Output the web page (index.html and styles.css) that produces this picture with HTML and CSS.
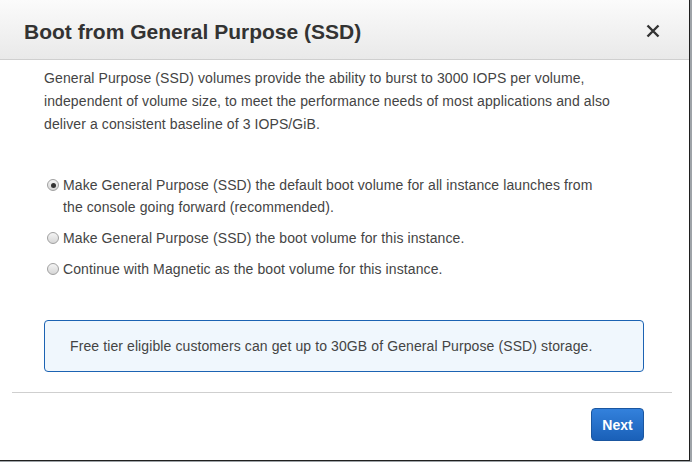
FILE: index.html
```html
<!DOCTYPE html>
<html>
<head>
<meta charset="utf-8">
<link rel="stylesheet" href="styles.css">
</head>
<body>
<div class="dialog">
  <div class="header">
    <h1 class="title">Boot from General Purpose (SSD)</h1>
    <span class="close" aria-label="Close">
      <svg width="14" height="14" viewBox="0 0 14 14"><path d="M1.5 1.5 L12.5 12.5 M12.5 1.5 L1.5 12.5" stroke="#333" stroke-width="2.4" stroke-linecap="butt"/></svg>
    </span>
  </div>
  <div class="body">
    <p class="intro">General Purpose (SSD) volumes provide the ability to burst to 3000 IOPS per volume, independent of volume size, to meet the performance needs of most applications and also deliver a consistent baseline of 3 IOPS/GiB.</p>
    <div class="options">
      <label class="option"><input class="radio" type="radio" name="boot" checked><span class="label-text">Make General Purpose (SSD) the default boot volume for all instance launches from the console going forward (recommended).</span></label>
      <label class="option"><input class="radio" type="radio" name="boot"><span class="label-text">Make General Purpose (SSD) the boot volume for this instance.</span></label>
      <label class="option"><input class="radio" type="radio" name="boot"><span class="label-text">Continue with Magnetic as the boot volume for this instance.</span></label>
    </div>
    <div class="info">Free tier eligible customers can get up to 30GB of General Purpose (SSD) storage.</div>
  </div>
  <div class="footer">
    <button class="btn-next">Next</button>
  </div>
</div>
</body>
</html>
```
FILE: styles.css
```css
html, body {
  margin: 0;
  padding: 0;
}
body {
  background: #9ea3a8;
  width: 692px;
  height: 462px;
  overflow: hidden;
  font-family: "Liberation Sans", Arial, sans-serif;
}
.dialog {
  width: 689px;
  height: 460px;
  background: #fff;
  border-right: 1px solid #1f1f1f;
  border-bottom: 1px solid #1f1f1f;
  display: flex;
  flex-direction: column;
}
.header {
  height: 59px;
  border-bottom: 1px solid #cfcfcf;
  background: linear-gradient(#fbfbfb, #e9e9e9);
  display: flex;
  align-items: center;
  justify-content: space-between;
  padding: 0 29px 0 24px;
}
.title {
  margin: 0;
  font-size: 21px;
  font-weight: bold;
  color: #333;
  padding-top: 4px;
}
.close {
  display: flex;
  width: 14px;
  height: 14px;
  margin-top: 3px;
}
.body {
  padding: 0 45px 0 44px;
}
.intro {
  margin: 7px 0 0;
  font-size: 14px;
  line-height: 23px;
  letter-spacing: 0.1px;
  color: #444;
}
.options {
  margin-top: 38px;
  display: flex;
  flex-direction: column;
  gap: 9px;
}
.option {
  display: flex;
  align-items: flex-start;
  font-size: 14px;
  line-height: 22px;
  letter-spacing: 0.1px;
  color: #444;
  padding-left: 3px;
}
.label-text {
  width: 545px;
}
.radio {
  appearance: none;
  -webkit-appearance: none;
  width: 12px;
  height: 12px;
  margin: 5px 4px 0 0;
  border: 1px solid #a0a0a0;
  border-radius: 50%;
  background: linear-gradient(#f4f4f4, #d6d6d6);
  box-sizing: border-box;
  flex: none;
  position: relative;
}
.radio:checked::after {
  content: "";
  position: absolute;
  left: 2.5px;
  top: 2.5px;
  width: 5px;
  height: 5px;
  border-radius: 50%;
  background: #333;
}
.info {
  margin-top: 40px;
  height: 50px;
  border: 1px solid #1c63b3;
  border-radius: 4px;
  background: #f0f7fd;
  font-size: 14px;
  letter-spacing: 0.1px;
  color: #444;
  display: flex;
  align-items: center;
  padding-left: 25px;
  box-sizing: content-box;
}
.footer {
  margin: 20px 17px 0 12px;
  border-top: 1px solid #cfcfcf;
  display: flex;
  justify-content: flex-end;
  padding: 15px 28px 0 0;
}
.btn-next {
  width: 53px;
  height: 33px;
  border: 1px solid #1a56a0;
  border-radius: 4px;
  background: linear-gradient(#3381dc, #1a60b8);
  color: #fff;
  font-family: "Liberation Sans", Arial, sans-serif;
  font-size: 14px;
  font-weight: bold;
  padding: 0;
}
```
